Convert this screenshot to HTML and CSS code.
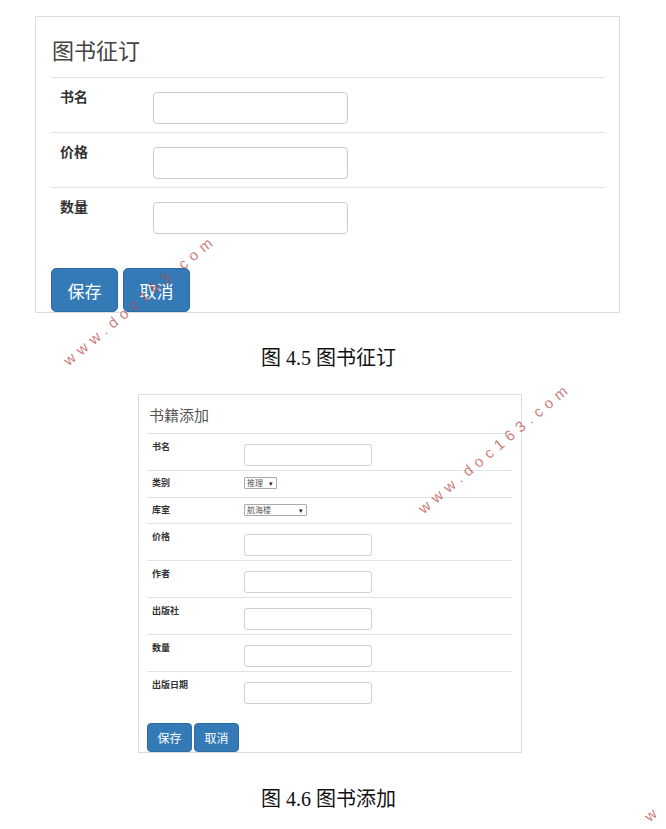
FILE: index.html
```html
<!DOCTYPE html>
<html lang="zh-CN">
<head>
<meta charset="utf-8">
<title>图书征订 / 书籍添加</title>
<link rel="stylesheet" href="styles.css">
</head>
<body>
<div class="page">
  <div class="panel big">
    <div class="title">图书征订</div>
    <div class="row">
      <div class="label">书名</div>
      <div class="input"></div>
    </div>
    <div class="row">
      <div class="label">价格</div>
      <div class="input"></div>
    </div>
    <div class="row">
      <div class="label">数量</div>
      <div class="input"></div>
    </div>
    <div class="actions">
      <div class="btn">保存</div>
      <div class="btn">取消</div>
    </div>
  </div>

  <div class="caption">图 4.5 图书征订</div>

  <div class="panel small">
    <div class="title">书籍添加</div>
    <div class="row">
      <div class="label">书名</div>
      <div class="input"></div>
    </div>
    <div class="row sel">
      <div class="label">类别</div>
      <div class="ctl"><div class="select s1"><span>推理</span><span class="arrow">▾</span></div></div>
    </div>
    <div class="row sel">
      <div class="label">库室</div>
      <div class="ctl"><div class="select s2"><span>航海楼</span><span class="arrow">▾</span></div></div>
    </div>
    <div class="row">
      <div class="label">价格</div>
      <div class="input"></div>
    </div>
    <div class="row">
      <div class="label">作者</div>
      <div class="input"></div>
    </div>
    <div class="row">
      <div class="label">出版社</div>
      <div class="input"></div>
    </div>
    <div class="row">
      <div class="label">数量</div>
      <div class="input"></div>
    </div>
    <div class="row">
      <div class="label">出版日期</div>
      <div class="input"></div>
    </div>
    <div class="actions">
      <div class="btn">保存</div>
      <div class="btn">取消</div>
    </div>
  </div>

  <div class="caption cap2">图 4.6 图书添加</div>

  <div class="wm wm1">www.doc163.com</div>
  <div class="wm wm2">www.doc163.com</div>
  <div class="wm wm3">w</div>
</div>
</body>
</html>
```

FILE: styles.css
```css
html, body {
  margin: 0;
  padding: 0;
  background: #ffffff;
}

.page {
  position: relative;
  overflow: hidden;
  padding-top: 16px;
  padding-bottom: 15px;
  font-family: "Noto Sans CJK SC", "Liberation Sans", sans-serif;
  color: #333333;
}

.panel {
  box-sizing: border-box;
  border: 1px solid #dddddd;
  background: #ffffff;
}

.row {
  display: flex;
  align-items: flex-start;
  border-top: 1px solid #e2e2e2;
}

.label {
  box-sizing: border-box;
  font-weight: bold;
  color: #333333;
}

.input {
  box-sizing: border-box;
  border: 1px solid #cccccc;
  background: #ffffff;
}

.actions {
  display: flex;
}

.btn {
  display: flex;
  align-items: center;
  justify-content: center;
  box-sizing: border-box;
  background: #337ab7;
  border: 1px solid #2e6da4;
  color: #ffffff;
  white-space: nowrap;
}

/* ---------- big panel ---------- */
.big {
  margin-left: 35px;
  width: 585px;
  padding: 0 14px 0 15px;
}

.big .title {
  padding: 17px 0 13px 1px;
  font-size: 22px;
  line-height: 30px;
  color: #444444;
}

.big .row {
  padding: 8px 0;
}

.big .label {
  width: 102px;
  padding-left: 9px;
  font-size: 14px;
  line-height: 20px;
}

.big .input {
  width: 195px;
  height: 32px;
  margin-top: 6px;
  border-radius: 4px;
}

.big .actions {
  margin-top: 26px;
  gap: 5px;
}

.big .btn {
  height: 44px;
  padding: 0 15.5px;
  border-radius: 5px;
  font-size: 17px;
}

/* ---------- small panel ---------- */
.small {
  margin-left: 138px;
  width: 384px;
  padding: 0 9px 0 8px;
  margin-top: 21px;
}

.small .title {
  padding: 10px 0 8px 2px;
  font-size: 15px;
  line-height: 20px;
  color: #555555;
}

.small .row {
  padding: 5px 0 4px;
}

.small .row.sel {
  padding: 4px 0 5.5px;
}

.small .label {
  width: 97px;
  padding-left: 5px;
  font-size: 9px;
  line-height: 15px;
}

.small .row.sel .label {
  line-height: 16px;
}

.small .input {
  width: 128px;
  height: 22px;
  margin-top: 5px;
  border-radius: 3px;
  border-color: #d0d0d0;
}

.ctl {
  height: 16px;
  display: flex;
  align-items: center;
}

.select {
  box-sizing: border-box;
  height: 12px;
  display: flex;
  align-items: center;
  justify-content: space-between;
  padding: 0 3px 0 2px;
  border: 1px solid #aaaaaa;
  border-radius: 1px;
  background: #ffffff;
  font-size: 8px;
  line-height: 10px;
  color: #555555;
}

.select .arrow {
  font-size: 7px;
  color: #222222;
}

.s1 { width: 33px; }
.s2 { width: 63px; }

.small .actions {
  margin-top: 15px;
  gap: 2px;
}

.small .btn {
  height: 29px;
  padding: 0 9.5px;
  border-radius: 4px;
  font-size: 12px;
}

/* ---------- captions ---------- */
.caption {
  margin-top: 30px;
  padding-right: 9px;
  text-align: center;
  font-family: "Liberation Serif", "Noto Sans CJK SC", serif;
  font-size: 20px;
  line-height: 30px;
  color: #111111;
}

.cap2 {
  margin-top: 31px;
}

/* ---------- watermark overlays ---------- */
.wm {
  position: absolute;
  font-family: "Liberation Sans", sans-serif;
  font-size: 15px;
  line-height: 15px;
  letter-spacing: 5.5px;
  color: rgba(190, 70, 70, 0.72);
  white-space: nowrap;
  transform-origin: 0 100%;
  transform: rotate(-40deg);
  z-index: 5;
}

.wm1 { left: 70px; top: 353px; }
.wm2 { left: 425px; top: 501px; }
.wm3 { left: 651px; top: 809px; }
```
